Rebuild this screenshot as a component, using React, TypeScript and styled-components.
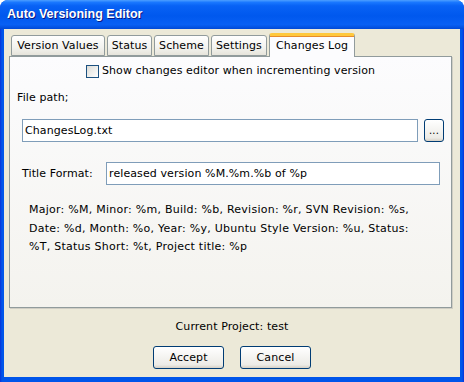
import React from 'react'
import styled, { createGlobalStyle } from 'styled-components'

const GlobalStyle = createGlobalStyle`
  html, body {
    margin: 0;
    padding: 0;
    background: #ffffff;
  }
  body {
    font-family: 'DejaVu Sans', Tahoma, sans-serif;
    font-size: 11px;
    letter-spacing: 0.1px;
    color: #000;
  }
`

const Window = styled.div`
  width: 464px;
  height: 382px;
  display: flex;
  flex-direction: column;
  border-radius: 8px 8px 0 0;
  background: linear-gradient(to right, #0831d9 0, #0055ea 2px, #0055ea 462px, #0831d9 464px);
  overflow: hidden;
`

const TitleBar = styled.div`
  height: 29px;
  flex: none;
  display: flex;
  align-items: center;
  padding: 0 7px 2px;
  box-sizing: border-box;
  background: linear-gradient(
    to bottom,
    #4d9fff 0%,
    #1a78ff 8%,
    #0862f5 20%,
    #0058ee 55%,
    #0860f4 85%,
    #0049d6 100%
  );
`

const TitleText = styled.span`
  font-family: 'Liberation Sans', Arial, sans-serif;
  font-weight: 700;
  font-size: 12.5px;
  letter-spacing: 0;
  color: #ffffff;
  text-shadow: 1px 1px 0 #0a1883;
`

const Client = styled.div`
  flex: 1;
  margin: 0 4px 5px 4px;
  background: #ece9d8;
  display: flex;
  flex-direction: column;
`

const TabStrip = styled.div`
  height: 27px;
  display: flex;
  align-items: flex-end;
  padding-left: 7px;
  position: relative;
  z-index: 1;
`

const Tab = styled.div<{ $active?: boolean; $w: number }>`
  width: ${({ $w }) => $w}px;
  height: ${({ $active }) => ($active ? 24 : 21)}px;
  margin-right: ${({ $active }) => ($active ? 0 : 2)}px;
  margin-bottom: ${({ $active }) => ($active ? -1 : 0)}px;
  box-sizing: border-box;
  display: flex;
  align-items: center;
  justify-content: center;
  padding-bottom: ${({ $active }) => ($active ? 3 : 0)}px;
  border: 1px solid #919b9c;
  border-bottom: ${({ $active }) => ($active ? 'none' : '1px solid #919b9c')};
  border-top: ${({ $active }) => ($active ? '3px solid #ffc83c' : '1px solid #919b9c')};
  border-radius: 3px 3px 0 0;
  background: ${({ $active }) =>
    $active ? '#fcfcfe' : 'linear-gradient(to bottom, #ffffff, #f3f3ef 60%, #e6e4db)'};
  box-shadow: ${({ $active }) => ($active ? 'inset 0 1px 0 #e68b2c' : 'none')};
  white-space: nowrap;
`

const Panel = styled.div`
  height: 252px;
  margin: 0 8px 0 5px;
  box-sizing: border-box;
  border: 1px solid #919b9c;
  box-shadow: 1px 1px 0 #d0cec4;
  background: linear-gradient(to bottom, #fcfcfe, #f4f3ee);
  padding: 7px 0 0 7px;
  display: flex;
  flex-direction: column;
`

const CheckRow = styled.label`
  align-self: center;
  margin-left: -7px;
  display: flex;
  align-items: center;
  gap: 3px;
  line-height: 14px;
`

const CheckBox = styled.span`
  width: 13px;
  height: 13px;
  box-sizing: border-box;
  border: 1px solid #1c5180;
  background: linear-gradient(135deg, #dcdcd7, #ffffff);
`

const FieldLabel = styled.div<{ $top: number }>`
  margin-top: ${({ $top }) => $top}px;
  line-height: 14px;
`

const FieldRow = styled.div<{ $top: number }>`
  margin-top: ${({ $top }) => $top}px;
  margin-left: 5px;
  display: flex;
  align-items: center;
`

const TextBox = styled.div<{ $w: number }>`
  width: ${({ $w }) => $w}px;
  height: 23px;
  box-sizing: border-box;
  border: 1px solid #7f9db9;
  background: #ffffff;
  padding: 0 2px;
  display: flex;
  align-items: center;
  white-space: nowrap;
`

const SmallButton = styled.div`
  width: 20px;
  height: 23px;
  margin-left: 6px;
  box-sizing: border-box;
  border: 1px solid #003c74;
  border-radius: 3px;
  background: linear-gradient(to bottom, #ffffff, #ecebe6 85%, #d6d0c5);
  display: flex;
  align-items: flex-end;
  justify-content: center;
  padding-bottom: 6px;
  font-size: 10px;
  line-height: 8px;
`

const InlineLabel = styled.span`
  width: 84px;
  flex: none;
`

const Hint = styled.div`
  margin: 16px 0 0 12px;
  line-height: 18.5px;
  letter-spacing: 0.25px;
  white-space: nowrap;
`

const Footer = styled.div`
  display: flex;
  flex-direction: column;
  align-items: center;
`

const ProjectText = styled.div`
  margin-top: 12px;
  line-height: 14px;
`

const ButtonRow = styled.div`
  margin-top: 12px;
  display: flex;
  gap: 16px;
`

const DialogButton = styled.div`
  width: 71px;
  height: 23px;
  box-sizing: border-box;
  border: 1px solid #003c74;
  border-radius: 3px;
  background: linear-gradient(to bottom, #ffffff, #ecebe6 85%, #d6d0c5);
  display: flex;
  align-items: center;
  justify-content: center;
`

const tabs = [
  { label: 'Version Values', w: 94 },
  { label: 'Status', w: 45 },
  { label: 'Scheme', w: 55 },
  { label: 'Settings', w: 56 },
  { label: 'Changes Log', w: 86, active: true },
]

export default function App() {
  return (
    <>
      <GlobalStyle />
      <Window>
        <TitleBar>
          <TitleText>Auto Versioning Editor</TitleText>
        </TitleBar>
        <Client>
          <TabStrip>
            {tabs.map((t) => (
              <Tab key={t.label} $w={t.w} $active={t.active}>
                {t.label}
              </Tab>
            ))}
          </TabStrip>
          <Panel>
            <CheckRow>
              <CheckBox />
              Show changes editor when incrementing version
            </CheckRow>
            <FieldLabel $top={13}>File path;</FieldLabel>
            <FieldRow $top={14}>
              <TextBox $w={396}>ChangesLog.txt</TextBox>
              <SmallButton>...</SmallButton>
            </FieldRow>
            <FieldRow $top={20}>
              <InlineLabel>Title Format:</InlineLabel>
              <TextBox $w={334}>released version %M.%m.%b of %p</TextBox>
            </FieldRow>
            <Hint>
              Major: %M, Minor: %m, Build: %b, Revision: %r, SVN Revision: %s,
              <br />
              Date: %d, Month: %o, Year: %y, Ubuntu Style Version: %u, Status:
              <br />
              %T, Status Short: %t, Project title: %p
            </Hint>
          </Panel>
          <Footer>
            <ProjectText>Current Project: test</ProjectText>
            <ButtonRow>
              <DialogButton>Accept</DialogButton>
              <DialogButton>Cancel</DialogButton>
            </ButtonRow>
          </Footer>
        </Client>
      </Window>
    </>
  )
}
